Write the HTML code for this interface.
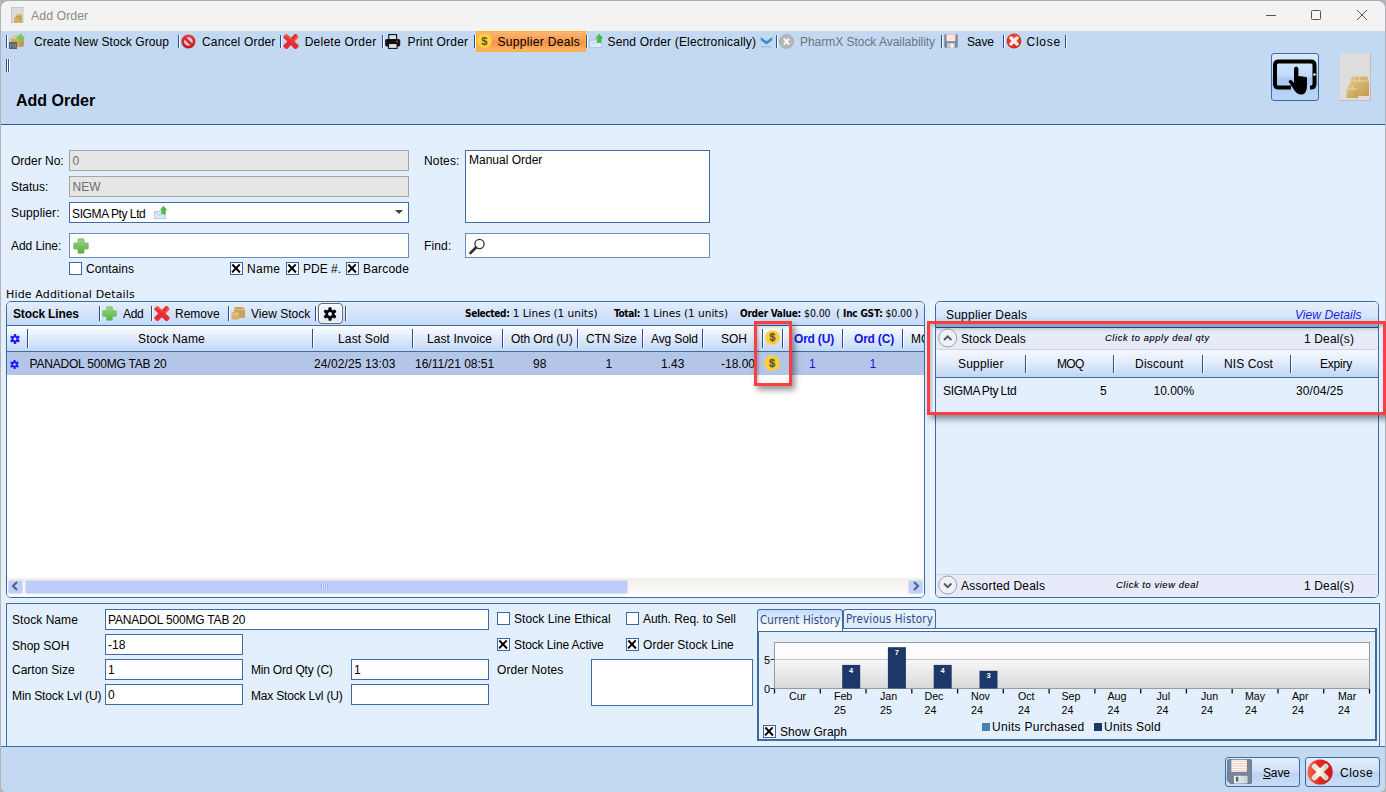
<!DOCTYPE html>
<html lang="en">
<head>
<meta charset="utf-8">
<title>Add Order</title>
<style>
*{box-sizing:border-box;margin:0;padding:0}
html,body{width:1386px;height:792px;overflow:hidden;background:#b2b3b6}
body{position:relative;font-family:"Liberation Sans",Arial,sans-serif;font-size:12px;color:#000}
#win{position:absolute;left:0;top:0;width:1386px;height:792px;overflow:hidden}
#winbg{position:absolute;left:1px;top:0;width:1384px;height:792px;background:#e4effd;border-radius:8px 8px 6px 6px;overflow:hidden;border-top:1px solid #a9adb6}
.abs,.t,.in,.sep,.cb{position:absolute}
.t{white-space:nowrap;line-height:14px;height:14px}
.g{color:#6d6d6d}
.sm{font-size:9.3px;font-style:italic;-webkit-text-stroke:.12px #000}
.seg{font-family:"DejaVu Sans Condensed","DejaVu Sans",sans-serif;font-size:11.5px;color:#2b4a85;letter-spacing:.21px}
.ax{font-size:10.67px;line-height:14px;height:28px;letter-spacing:-.05px}
.btn{border:1px solid #3f6ba3;border-radius:3px;background:linear-gradient(#e3eefd,#cfe0f8 50%,#bdd3f3 52%,#c9dcf7)}
.tah{font-family:"DejaVu Sans",sans-serif;font-size:10.5px}
.tah b{font-family:"DejaVu Sans Condensed","DejaVu Sans",sans-serif;font-size:10px;letter-spacing:-.35px}
.in{background:#fff;border:1px solid #3f6ba3}
.in.dis{background:#e6e6e6;border-color:#a5a5a5}
.in .t{left:2.5px}
.sep{width:2px;background:linear-gradient(90deg,#2c4f8c 50%,#fff 50%);height:15px}
.cb{width:13px;height:13px;border:1px solid #3a66a7;background:#fff}
.cb.on::before,.cb.on::after{content:"";position:absolute;left:4.4px;top:0.2px;width:2.2px;height:10.6px;background:#000;transform:rotate(44deg)}
.cb.on::after{transform:rotate(-44deg)}
#titlebar{left:0;top:0;width:1384px;height:30px;background:#f3f3f3}
#band{left:0;top:30px;width:1384px;height:93px;background:#c2d9f1}
#bandline{left:0;top:123px;width:1384px;height:1px;background:#2f5f98}
#footer{left:0;top:745px;width:1384px;height:46px;background:#c2d9f1;border-top:1px solid #3f6ba3}
</style>
</head>
<body>
<div id="win">
<div id="winbg">
<div id="titlebar" class="abs"></div>
<div id="band" class="abs"></div>
<div id="bandline" class="abs"></div>
<div id="footer" class="abs"></div>
</div>
<!-- TITLE BAR -->
<div class="t" style="left:31px;top:8px;font-size:12.4px;line-height:16px;height:16px;color:#8a8a8a">Add Order</div>
<!--TOOLBAR-->
<!-- title icon -->
<svg class="abs" style="left:11px;top:7px" width="13" height="16" viewBox="0 0 13 16"><rect x="0.5" y="0.5" width="11.5" height="15" fill="#dddbda" stroke="#c9c7c6"/><path d="M3 15.5V11.5L5 9.5V8L7 7H11V15.5Z" fill="#c9a35c"/><path d="M3 11.5H8.5V15.5H3Z" fill="#d4b06a"/><path d="M5 8H9.5L11 7" stroke="#e3c88e" fill="none"/></svg>
<!-- window controls -->
<svg class="abs" style="left:1260px;top:5px" width="120" height="22" viewBox="0 0 120 22"><g stroke="#555" stroke-width="1" fill="none"><path d="M6 10.5H16"/><rect x="51.5" y="5.5" width="9" height="9" rx="1"/><path d="M97 5L107 15M107 5L97 15"/></g></svg>
<!-- toolbar row -->
<div class="sep" style="left:6px;top:35px;height:13px"></div>
<svg class="abs" style="left:9px;top:33px" width="16" height="18" viewBox="0 0 16 18"><path d="M1.5 6L4.5 2H12.5L15 5V12L13 14H1.5Z" fill="#cfa964"/><path d="M4.5 2H12.5L15 5H10.5L9 6H1.5Z" fill="#e2c78f"/><path d="M10.5 5H15V12L13 14H10.5Z" fill="#c29a52"/><path d="M10.2 1H12.8V3.3H15.2V5.9H12.8V8.3H10.2V5.9H7.8V3.3H10.2Z" fill="#74c65a" stroke="#8fd676" stroke-width=".5"/><rect x="0" y="9" width="8" height="7" fill="#5a616d"/><path d="M1.5 10.5V14.5M3.2 10.5V14.5M5 10.5V14.5M6.5 10.5V14.5" stroke="#8b929e" stroke-width=".8"/></svg>
<div class="t" style="left:34px;top:35px;letter-spacing:.07px">Create New Stock Group</div>
<div class="sep" style="left:178px;top:35px;height:13px"></div>
<svg class="abs" style="left:181px;top:33.5px" width="15" height="15" viewBox="0 0 15 15"><defs><linearGradient id="cn" x1="0" y1="0" x2="0" y2="1"><stop offset="0" stop-color="#e43a3a"/><stop offset="1" stop-color="#c01820"/></linearGradient></defs><circle cx="7.4" cy="7.5" r="5.7" fill="#e9c9d2" stroke="url(#cn)" stroke-width="2.7"/><path d="M3.6 3.7L11.2 11.3" stroke="#d42a2e" stroke-width="2.7"/></svg>
<div class="t" style="left:202px;top:35px;letter-spacing:.18px">Cancel Order</div>
<div class="sep" style="left:280px;top:35px;height:13px"></div>
<svg class="abs" style="left:283px;top:34px" width="16" height="15" viewBox="0 0 16 15"><defs><linearGradient id="rx1" x1="0" y1="1" x2="1" y2="0"><stop offset="0" stop-color="#e8222c"/><stop offset=".6" stop-color="#ea3034"/><stop offset="1" stop-color="#f4805e"/></linearGradient></defs><g fill="url(#rx1)"><rect x="-2.6" y="-9" width="5.2" height="18" rx="1.4" transform="translate(8 7.5) rotate(45)"/><rect x="-2.6" y="-9" width="5.2" height="18" rx="1.4" transform="translate(8 7.5) rotate(-45)"/></g></svg>
<div class="t" style="left:304.7px;top:35px;letter-spacing:.25px">Delete Order</div>
<div class="sep" style="left:382px;top:35px;height:13px"></div>
<svg class="abs" style="left:385px;top:34px" width="16" height="15" viewBox="0 0 16 15"><rect x="3.8" y="0.6" width="7.8" height="5" fill="#cfe0f5" stroke="#111" stroke-width="1.1"/><rect x="0.2" y="5" width="15" height="7.4" rx="1.6" fill="#111"/><rect x="3.6" y="9.6" width="8.4" height="4.8" fill="#f4f4f4" stroke="#111" stroke-width="1.1"/><path d="M5 12H10.5" stroke="#bbb" stroke-width=".8"/><circle cx="12" cy="7.4" r="1" fill="#e8262d"/></svg>
<div class="t" style="left:407.5px;top:35px;letter-spacing:.18px">Print Order</div>
<div class="sep" style="left:474px;top:35px;height:13px"></div>
<div class="abs" style="left:476px;top:31px;width:110px;height:21px;border:1px solid #fcb42c;background:linear-gradient(#fcb774,#f9a055 40%,#f78f45 55%,#fbac5e 85%,#fcb366)"></div>
<svg class="abs" style="left:477px;top:33px" width="15" height="16" viewBox="0 0 15 16"><circle cx="7.4" cy="7.8" r="7.4" fill="#fdd03c"/><text x="7.4" y="11.8" font-size="11" font-weight="bold" font-family="Liberation Sans, sans-serif" text-anchor="middle" fill="#5f5320">$</text></svg><div class="sep" style="left:586px;top:35px;height:13px"></div>
<div class="t" style="left:497.5px;top:35px;letter-spacing:.33px">Supplier Deals</div>
<svg class="abs" style="left:588px;top:33px" width="16" height="16" viewBox="0 0 16 16"><rect x="1.5" y="7" width="12" height="7.6" fill="#dde9fa" stroke="#a9c2e6" stroke-width=".9"/><path d="M1.8 7.4L6.5 11L9 9" fill="none" stroke="#b3c9ea" stroke-width=".9"/><defs><linearGradient id="sg1" x1="0" y1="0" x2="1" y2="0"><stop offset="0" stop-color="#6fd070"/><stop offset="1" stop-color="#27a832"/></linearGradient></defs><path d="M11 0.8L15.2 5.6H13.2V10H8.8V5.6H6.8Z" fill="url(#sg1)"/></svg>
<div class="t" style="left:607.5px;top:35px;letter-spacing:.17px">Send Order (Electronically)</div>
<svg class="abs" style="left:760px;top:36px" width="13" height="12" viewBox="0 0 13 12"><path d="M0.8 1L6.5 5.2L12.2 1V4.2L6.5 8.6L0.8 4.2Z" fill="#3a90c2"/><path d="M1 10.8H12" stroke="#9db4cc" stroke-width="1"/></svg>
<div class="sep" style="left:776px;top:35px;height:13px"></div>
<svg class="abs" style="left:779px;top:34px" width="15" height="15" viewBox="0 0 15 15"><circle cx="7.5" cy="7.5" r="6.8" fill="#b8b8b8" stroke="#a5a5a5"/><path d="M5 4.6L10 10.4M10 4.6L5 10.4" stroke="#fff" stroke-width="2"/></svg>
<div class="t" style="left:800px;top:35px;color:#6f7280;letter-spacing:-.03px">PharmX Stock Availability</div>
<div class="sep" style="left:941px;top:35px;height:13px"></div>
<svg class="abs" style="left:944px;top:34px" width="14" height="14" viewBox="0 0 14 14"><rect x="0.3" y="0.3" width="13.4" height="13.4" rx=".8" fill="#7a8696"/><rect x="2.4" y="0.3" width="9" height="7" fill="#fde2db"/><rect x="3" y="9" width="8" height="4.7" fill="#c5ccd7"/><rect x="6.8" y="9.8" width="2.6" height="3.9" fill="#f7f8fa"/></svg>
<div class="t" style="left:967px;top:35px;letter-spacing:-.15px">Save</div>
<div class="sep" style="left:1003px;top:35px;height:13px"></div>
<svg class="abs" style="left:1005.6px;top:33.4px" width="16" height="16" viewBox="0 0 16 16"><defs><radialGradient id="cl1" cx=".5" cy=".35" r=".7"><stop offset="0" stop-color="#f0523e"/><stop offset="1" stop-color="#d8201c"/></radialGradient></defs><circle cx="8" cy="8" r="7.4" fill="url(#cl1)"/><path d="M5 5L11 11M11 5L5 11" stroke="#f6efe6" stroke-width="3.3" stroke-linecap="round"/></svg>
<div class="t" style="left:1026.5px;top:35px;letter-spacing:.75px">Close</div>
<div class="sep" style="left:1065px;top:35px;height:13px"></div>
<!-- grip -->
<div class="sep" style="left:6px;top:59px;height:13px"></div><div class="sep" style="left:8px;top:59px;height:13px"></div>
<div class="t" style="left:16px;top:92px;font-size:16px;font-weight:bold;line-height:18px;height:18px">Add Order</div>
<!--FORM-->
<!-- top right buttons -->
<div class="abs" style="left:1271px;top:53px;width:48px;height:48px;border:1px solid #3f6ba3;border-radius:3px;background:linear-gradient(#d8ebff,#c3dcfb 45%,#a9c9f3 55%,#bdd6fa)"></div>
<svg class="abs" style="left:1271px;top:53px" width="48" height="48" viewBox="0 0 48 48"><path d="M20 34.5H7.5Q4 34.5 4 31V12Q4 8.5 7.5 8.5H40Q43.5 8.5 43.5 12V31Q43.5 34.5 40 34.5H39" fill="none" stroke="#000" stroke-width="4"/><circle cx="43.5" cy="21.5" r="1.2" fill="#fff"/><path d="M23 16Q23 13.5 25.2 13.5Q27.4 13.5 27.4 16V23.5Q28.5 22.6 30 23.6Q31.5 22.8 33 24Q34.5 23.4 36 24.6V32Q36 41.5 30.5 41.5Q25.5 41.5 22.5 36L17.5 28.5Q18.5 26 21 27.5L23 30Z" fill="#000"/></svg>
<svg class="abs" style="left:1340px;top:53px" width="31" height="48" viewBox="0 0 31 48"><defs><linearGradient id="bx1" x1="0" y1="0" x2="1" y2="1"><stop offset="0" stop-color="#e2c88f"/><stop offset="1" stop-color="#c49a4e"/></linearGradient></defs><rect x="0" y="0" width="31" height="48" fill="#dedcdc"/><path d="M0 47.5H31M30.5 0V48" stroke="#bdbbbb"/><path d="M12 23.5H27L29 28V43H10V28Z" fill="url(#bx1)"/><path d="M10 28H29" stroke="#ead7a8" stroke-width="1"/><path d="M19.5 23.5V28" stroke="#ead7a8"/><path d="M8 32.5H16.5L18 36V45H6.5V36Z" fill="url(#bx1)"/><path d="M6.5 36H18" stroke="#ead7a8"/><path d="M12.3 32.5V36" stroke="#ead7a8"/></svg>
<!-- form -->
<div class="t" style="left:11px;top:154px">Order No:</div>
<div class="in dis" style="left:69px;top:150px;width:340px;height:21px"><div class="t g" style="top:3px">0</div></div>
<div class="t" style="left:11px;top:180px">Status:</div>
<div class="in dis" style="left:69px;top:176px;width:340px;height:21px"><div class="t g" style="top:3px">NEW</div></div>
<div class="t" style="left:11px;top:206px;letter-spacing:.15px">Supplier:</div>
<div class="in" style="left:69px;top:202px;width:340px;height:21px"><div class="t" style="top:4px;left:2px;letter-spacing:-.36px;word-spacing:-.3px">SIGMA Pty Ltd</div>
<svg class="abs" style="left:83px;top:1.5px" width="15" height="15" viewBox="0 0 16 16"><rect x="1.5" y="7" width="12" height="7.6" fill="#dde9fa" stroke="#a9c2e6" stroke-width=".9"/><path d="M1.8 7.4L6.5 11L9 9" fill="none" stroke="#b3c9ea" stroke-width=".9"/><defs><linearGradient id="sg2" x1="0" y1="0" x2="1" y2="0"><stop offset="0" stop-color="#6fd070"/><stop offset="1" stop-color="#27a832"/></linearGradient></defs><path d="M11 0.8L15.2 5.6H13.2V10H8.8V5.6H6.8Z" fill="url(#sg2)"/></svg>
<svg class="abs" style="left:325px;top:7px" width="8" height="4" viewBox="0 0 8 4"><path d="M0 0H8L4 4Z" fill="#444"/></svg></div>
<div class="t" style="left:11px;top:239px;letter-spacing:-.05px">Add Line:</div>
<div class="in" style="left:69px;top:233px;width:340px;height:25px;border-color:#6a8cc0">
<svg class="abs" style="left:3px;top:4px" width="16" height="16" viewBox="0 0 16 16"><defs><linearGradient id="pl1" x1="0" y1="0" x2="0" y2="1"><stop offset="0" stop-color="#9ad788"/><stop offset="1" stop-color="#58ad40"/></linearGradient></defs><path d="M5.6 0.8H10.4Q11 0.8 11 1.4V5H14.6Q15.2 5 15.2 5.6V10.4Q15.2 11 14.6 11H11V14.6Q11 15.2 10.4 15.2H5.6Q5 15.2 5 14.6V11H1.4Q0.8 11 0.8 10.4V5.6Q0.8 5 1.4 5H5V1.4Q5 0.8 5.6 0.8Z" fill="url(#pl1)" stroke="#6fbd58" stroke-width=".8"/></svg></div>
<div class="cb" style="left:69px;top:262px"></div><div class="t" style="left:86px;top:262px;letter-spacing:.1px">Contains</div>
<div class="cb on" style="left:230px;top:262px"></div><div class="t" style="left:247px;top:262px;letter-spacing:.3px">Name</div>
<div class="cb on" style="left:286px;top:262px"></div><div class="t" style="left:303px;top:262px">PDE #.</div>
<div class="cb on" style="left:346px;top:262px"></div><div class="t" style="left:363px;top:262px;letter-spacing:.2px">Barcode</div>
<div class="t" style="left:424px;top:154px;letter-spacing:.15px">Notes:</div>
<div class="in" style="left:465px;top:150px;width:245px;height:73px"><div class="t" style="top:2px;left:3px">Manual Order</div></div>
<div class="t" style="left:424px;top:239px;letter-spacing:.15px">Find:</div>
<div class="in" style="left:465px;top:233px;width:245px;height:25px;border-color:#6a8cc0">
<svg class="abs" style="left:3px;top:4px" width="18" height="17" viewBox="0 0 18 17"><circle cx="10.5" cy="6" r="4.6" fill="#fff" stroke="#333" stroke-width="1.3"/><path d="M7 9.5L1.5 15" stroke="#333" stroke-width="2.6" stroke-linecap="round"/></svg></div>
<div class="t" style="left:6px;top:288px;font-family:'DejaVu Sans',sans-serif;font-size:11px;letter-spacing:.15px">Hide Additional Details</div>
<!--STOCKLINES-->
<!-- stock lines panel -->
<div class="abs" style="left:6px;top:301px;width:919px;height:297px;border:1px solid #3f6ba3;border-radius:5px;background:#fff;overflow:hidden">
<div class="abs" style="left:0;top:0;width:918px;height:23px;background:linear-gradient(#e3eefd,#d3e3fa 50%,#c6daf7)"></div>
<div class="abs" style="left:0;top:23px;width:918px;height:1px;background:#3f6ba3"></div>
<div class="abs" style="left:0;top:24px;width:918px;height:25px;background:linear-gradient(#fbfdff,#e4eefc 40%,#cfe0f8 75%,#c4d8f6)"></div>
<div class="abs" style="left:0;top:49px;width:918px;height:1px;background:#3f6ba3"></div>
<div class="abs" style="left:0;top:50px;width:918px;height:23px;background:#b4c6e7"></div>
<div class="abs" style="left:0;top:276px;width:918px;height:19px;background:linear-gradient(#f0eee7,#f8f7f3 50%,#fefefd)"></div>
<div class="abs" style="left:1px;top:278px;width:15px;height:14px;background:#c1d0fa;border:1px solid #d5defb;border-radius:2px"></div>
<div class="abs" style="left:18px;top:278px;width:603px;height:14px;background:#bdcdf8;border:1px solid #d5defb;border-radius:2px"></div>
<div class="abs" style="left:901px;top:278px;width:15px;height:14px;background:#c1d0fa;border:1px solid #d5defb;border-radius:2px"></div>
</div>
<svg class="abs" style="left:11px;top:581px" width="8" height="10" viewBox="0 0 8 10"><path d="M6 1L2 5L6 9" fill="none" stroke="#4d6185" stroke-width="2"/></svg>
<svg class="abs" style="left:912px;top:581px" width="8" height="10" viewBox="0 0 8 10"><path d="M2 1L6 5L2 9" fill="none" stroke="#4d6185" stroke-width="2"/></svg>
<div class="abs" style="left:321px;top:584px;width:7px;height:5px;background:repeating-linear-gradient(90deg,#9fb4ec 0 1px,#dfe7fd 1px 2px)"></div>
<!-- header toolbar -->
<div class="t" style="left:13px;top:307px;font-weight:bold;letter-spacing:-.15px">Stock Lines</div>
<div class="sep" style="left:99px;top:306px;height:15px"></div>
<svg class="abs" style="left:102px;top:306px" width="15" height="15" viewBox="0 0 16 16"><defs><linearGradient id="pl2" x1="0" y1="0" x2="0" y2="1"><stop offset="0" stop-color="#9ad788"/><stop offset="1" stop-color="#58ad40"/></linearGradient></defs><path d="M5.6 0.8H10.4Q11 0.8 11 1.4V5H14.6Q15.2 5 15.2 5.6V10.4Q15.2 11 14.6 11H11V14.6Q11 15.2 10.4 15.2H5.6Q5 15.2 5 14.6V11H1.4Q0.8 11 0.8 10.4V5.6Q0.8 5 1.4 5H5V1.4Q5 0.8 5.6 0.8Z" fill="url(#pl2)" stroke="#6fbd58" stroke-width=".8"/></svg>
<div class="t" style="left:123px;top:307px;letter-spacing:-.3px">Add</div>
<div class="sep" style="left:151px;top:306px;height:15px"></div>
<svg class="abs" style="left:154px;top:306px" width="16" height="15" viewBox="0 0 16 15"><defs><linearGradient id="rx2" x1="0" y1="1" x2="1" y2="0"><stop offset="0" stop-color="#e8222c"/><stop offset=".6" stop-color="#ea3034"/><stop offset="1" stop-color="#f4805e"/></linearGradient></defs><g fill="url(#rx2)"><rect x="-2.6" y="-9" width="5.2" height="18" rx="1.4" transform="translate(8 7.5) rotate(45)"/><rect x="-2.6" y="-9" width="5.2" height="18" rx="1.4" transform="translate(8 7.5) rotate(-45)"/></g></svg>
<div class="t" style="left:175px;top:307px">Remove</div>
<div class="sep" style="left:228px;top:306px;height:15px"></div>
<svg class="abs" style="left:231px;top:306px" width="15" height="14" viewBox="0 0 15 14"><path d="M4 1H12L14 3.5V12H3V3.5Z" fill="#c9a35c"/><path d="M3 3.5H14" stroke="#e0c48a"/><path d="M1.5 6H7L8 8V13.5H0.5V8Z" fill="#d6b26c"/><path d="M0.5 8H8" stroke="#e8d19d"/></svg>
<div class="t" style="left:251px;top:307px">View Stock</div>
<div class="sep" style="left:315px;top:306px;height:15px"></div>
<div class="abs" style="left:318px;top:303px;width:25px;height:21px;border:1px solid #6a6a6a;border-radius:4px;background:linear-gradient(#f4f8fe,#dce8fa);box-shadow:inset 0 0 0 1px rgba(255,255,255,.8)"></div>
<svg class="abs" style="left:323px;top:307px" width="14" height="14" viewBox="0 0 14 14"><g fill="#000"><circle cx="7" cy="7" r="4.6"/><g id="gt"><rect x="5.4" y="0.3" width="3.2" height="13.4" rx="1"/></g><rect x="5.4" y="0.3" width="3.2" height="13.4" rx="1" transform="rotate(60 7 7)"/><rect x="5.4" y="0.3" width="3.2" height="13.4" rx="1" transform="rotate(120 7 7)"/></g><circle cx="7" cy="7" r="2" fill="#e8f0fc"/></svg>
<div class="sep" style="left:345px;top:306px;height:15px"></div>
<div class="t tah" style="left:465px;top:306px"><b>Selected:</b> <span>1 Lines (1 units)</span></div>
<div class="t tah" style="left:614px;top:306px"><b>Total:</b> <span>1 Lines (1 units)</span></div>
<div class="t tah" style="left:740px;top:306px"><b style="letter-spacing:-.25px">Order Value:</b></div>
<div class="t tah" style="left:804px;top:306px;font-family:'DejaVu Sans Condensed',sans-serif;letter-spacing:-.12px">$0.00</div>
<div class="t tah" style="left:836px;top:306px">(</div>
<div class="t tah" style="left:843px;top:306px"><b style="letter-spacing:-.2px">Inc GST:</b></div>
<div class="t tah" style="left:885.5px;top:306px;font-family:'DejaVu Sans Condensed',sans-serif;letter-spacing:-.15px">$0.00</div>
<div class="t tah" style="left:914.5px;top:306px">)</div>
<!-- column headers -->
<svg class="abs gear" style="left:10px;top:334px" width="10" height="10" viewBox="0 0 14 14"><g fill="#1a1aff"><circle cx="7" cy="7" r="4.6"/><rect x="5.2" y="0" width="3.6" height="14" rx="1"/><rect x="5.2" y="0" width="3.6" height="14" rx="1" transform="rotate(60 7 7)"/><rect x="5.2" y="0" width="3.6" height="14" rx="1" transform="rotate(120 7 7)"/></g><circle cx="7" cy="7" r="2" fill="#eef4fe"/></svg>
<div class="sep" style="left:27px;top:329px;height:19px"></div>
<div class="t" style="left:138px;top:332px;letter-spacing:.15px">Stock Name</div>
<div class="sep" style="left:312px;top:329px;height:19px"></div>
<div class="t" style="left:338px;top:332px;letter-spacing:.15px">Last Sold</div>
<div class="sep" style="left:412px;top:329px;height:19px"></div>
<div class="t" style="left:427px;top:332px;letter-spacing:.08px">Last Invoice</div>
<div class="sep" style="left:502px;top:329px;height:19px"></div>
<div class="t" style="left:511px;top:332px;letter-spacing:-.1px">Oth Ord (U)</div>
<div class="sep" style="left:577px;top:329px;height:19px"></div>
<div class="t" style="left:586px;top:332px;letter-spacing:-.1px">CTN Size</div>
<div class="sep" style="left:642px;top:329px;height:19px"></div>
<div class="t" style="left:651px;top:332px;letter-spacing:-.12px">Avg Sold</div>
<div class="sep" style="left:702px;top:329px;height:19px"></div>
<div class="t" style="left:721px;top:332px">SOH</div>
<div class="sep" style="left:762px;top:329px;height:19px"></div>
<svg class="abs" style="left:765px;top:330px" width="15" height="15" viewBox="0 0 15 15"><circle cx="7.5" cy="7.5" r="7.3" fill="#fdd038"/><text x="7.5" y="11.2" font-size="10.5" font-weight="bold" font-family="Liberation Sans, sans-serif" text-anchor="middle" fill="#605a38" stroke="#605a38" stroke-width=".3">$</text></svg>
<div class="sep" style="left:782px;top:329px;height:19px"></div>
<div class="t" style="left:794px;top:332px;font-weight:bold;color:#1414e6;letter-spacing:-.2px">Ord (U)</div>
<div class="sep" style="left:842px;top:329px;height:19px"></div>
<div class="t" style="left:854px;top:332px;font-weight:bold;color:#1414e6;letter-spacing:-.2px">Ord (C)</div>
<div class="sep" style="left:902px;top:329px;height:19px"></div>
<div class="t" style="left:911px;top:332px;width:13px;overflow:hidden">MOQ</div>
<!-- row -->
<svg class="abs gear" style="left:10px;top:359.5px" width="9" height="9" viewBox="0 0 14 14"><g fill="#1a1aff"><circle cx="7" cy="7" r="4.6"/><rect x="5.2" y="0" width="3.6" height="14" rx="1"/><rect x="5.2" y="0" width="3.6" height="14" rx="1" transform="rotate(60 7 7)"/><rect x="5.2" y="0" width="3.6" height="14" rx="1" transform="rotate(120 7 7)"/></g><circle cx="7" cy="7" r="2" fill="#c4d2ec"/></svg>
<div class="t" style="left:29.5px;top:357px;letter-spacing:-.2px">PANADOL 500MG TAB 20</div>
<div class="t" style="left:314px;top:357px;letter-spacing:.1px">24/02/25 13:03</div>
<div class="t" style="left:415px;top:357px">16/11/21 08:51</div>
<div class="t" style="left:533px;top:357px">98</div>
<div class="t" style="left:605.5px;top:357px">1</div>
<div class="t" style="left:661px;top:357px">1.43</div>
<div class="t" style="left:721px;top:357px">-18.00</div>
<svg class="abs" style="left:764px;top:355px" width="16" height="16" viewBox="0 0 16 16"><circle cx="8" cy="8" r="7.8" fill="#fdd038"/><text x="8" y="11.8" font-size="11" font-weight="bold" font-family="Liberation Sans, sans-serif" text-anchor="middle" fill="#605a38" stroke="#605a38" stroke-width=".3">$</text></svg>
<div class="t" style="left:809px;top:357px;color:#1414d2">1</div>
<div class="t" style="left:869.5px;top:357px;color:#1414d2">1</div>
<!--DEALS-->
<!-- splitter -->
<div class="abs" style="left:930px;top:301px;width:5px;height:297px;background:#edf4fe"></div>
<!-- supplier deals panel -->
<div class="abs" style="left:935px;top:301px;width:444px;height:297px;border:1px solid #3f6ba3;border-radius:5px;background:#e4effd;overflow:hidden">
<div class="abs" style="left:0;top:0;width:442px;height:25px;background:linear-gradient(#e6f0fd,#d6e5fb 55%,#c3d7f5 85%,#a3b8da)"></div><div class="abs" style="left:0;top:25px;width:442px;height:1px;background:#254579"></div>
<div class="abs" style="left:0;top:26px;width:442px;height:22px;background:linear-gradient(#c9cde0,#e0e5f6 3px,#e6eaf9 5px);border-bottom:1px solid #d2d3dc;border-radius:0 0 3px 3px"></div>
<div class="abs" style="left:0;top:48px;width:442px;height:27px;background:linear-gradient(#f5f9ff,#e4eefc 40%,#cfe0f8 75%,#c0d5f5)"></div>
<div class="abs" style="left:0;top:75px;width:442px;height:1px;background:#3f6ba3"></div>
<div class="abs" style="left:0;top:272px;width:442px;height:23px;background:#e6eaf9;border-top:1px solid #cfd0d8;border-radius:3px 3px 0 0"></div>
</div>
<div class="t" style="left:946px;top:308px;letter-spacing:.22px">Supplier Deals</div>
<div class="t" style="left:1295px;top:308px;font-style:italic;color:#1c1ce0;letter-spacing:.06px">View Details</div>
<svg class="abs" style="left:938px;top:328px" width="20" height="20" viewBox="0 0 20 20"><circle cx="9.7" cy="10" r="9" fill="#eef0fa" stroke="#a0a0a0"/><path d="M6 12L9.7 8.3L13.4 12" fill="none" stroke="#555" stroke-width="1.8"/></svg>
<div class="t" style="left:961px;top:331.5px;letter-spacing:.08px">Stock Deals</div>
<div class="t sm" style="left:1105px;top:330.5px;letter-spacing:.62px">Click to apply deal qty</div>
<div class="t" style="left:1304px;top:331.5px;letter-spacing:.15px">1 Deal(s)</div>
<div class="t" style="left:958px;top:356.5px;letter-spacing:.2px">Supplier</div>
<div class="sep" style="left:1025px;top:355px;height:18px"></div>
<div class="t" style="left:1057px;top:356.5px;letter-spacing:-.7px">MOQ</div>
<div class="sep" style="left:1113px;top:355px;height:18px"></div>
<div class="t" style="left:1135px;top:356.5px;letter-spacing:.25px">Discount</div>
<div class="sep" style="left:1202px;top:355px;height:18px"></div>
<div class="t" style="left:1224px;top:356.5px;letter-spacing:.12px">NIS Cost</div>
<div class="sep" style="left:1290px;top:355px;height:18px"></div>
<div class="t" style="left:1320px;top:356.5px;letter-spacing:-.2px">Expiry</div>
<div class="t" style="left:943px;top:383.5px;letter-spacing:-.3px;word-spacing:-.7px">SIGMA Pty Ltd</div>
<div class="t" style="left:1100px;top:383.5px">5</div>
<div class="t" style="left:1153.5px;top:383.5px">10.00%</div>
<div class="t" style="left:1296px;top:383.5px;letter-spacing:.08px">30/04/25</div>
<svg class="abs" style="left:938px;top:575px" width="20" height="20" viewBox="0 0 20 20"><circle cx="9.7" cy="10" r="9" fill="#eef0fa" stroke="#a0a0a0"/><path d="M6 8.5L9.7 12.2L13.4 8.5" fill="none" stroke="#555" stroke-width="1.8"/></svg>
<div class="t" style="left:961px;top:578.5px;letter-spacing:.2px">Assorted Deals</div>
<div class="t sm" style="left:1116px;top:577.5px;letter-spacing:.6px">Click to view deal</div>
<div class="t" style="left:1304px;top:578.5px;letter-spacing:.15px">1 Deal(s)</div>
<!-- red highlight boxes -->
<div class="abs" style="left:754px;top:321px;width:38px;height:65px;border:3px solid #fb3e40;box-shadow:3px 4px 6px rgba(0,0,0,.42), inset 2px 3px 3px rgba(0,0,0,.2)"></div>
<div class="abs" style="left:927px;top:321px;width:459px;height:94px;border:3px solid #fb3e40;box-shadow:3px 4px 6px rgba(0,0,0,.42), inset 2px 3px 3px rgba(0,0,0,.2)"></div>
<!--BOTTOM-->
<!-- bottom panel -->
<div class="abs" style="left:6px;top:603px;width:1374px;height:144px;border:1px solid #3f6ba3;background:#e4effd"></div>
<div class="t" style="left:12px;top:613px;letter-spacing:0.05px;">Stock Name</div>
<div class="in" style="left:105px;top:609px;width:384px;height:21px"><div class="t" style="top:2.5px;left:2px"><span style="letter-spacing:-.18px">PANADOL 500MG TAB 20</span></div></div>
<div class="t" style="left:12px;top:638.5px;">Shop SOH</div>
<div class="in" style="left:105px;top:634px;width:138px;height:21px"><div class="t" style="top:2.5px;left:2px">-18</div></div>
<div class="t" style="left:12px;top:662.5px;">Carton Size</div>
<div class="in" style="left:105px;top:659px;width:138px;height:21px"><div class="t" style="top:2.5px;left:2px">1</div></div>
<div class="t" style="left:251px;top:662.5px;letter-spacing:-0.2px;">Min Ord Qty (C)</div>
<div class="in" style="left:351px;top:659px;width:138px;height:21px"><div class="t" style="top:2.5px;left:2px">1</div></div>
<div class="t" style="left:12px;top:688.5px;letter-spacing:-0.12px;">Min Stock Lvl (U)</div>
<div class="in" style="left:105px;top:684px;width:138px;height:21px"><div class="t" style="top:3px;left:2px">0</div></div>
<div class="t" style="left:251px;top:688.5px;letter-spacing:-0.18px;">Max Stock Lvl (U)</div>
<div class="in" style="left:351px;top:684px;width:138px;height:21px"></div>
<div class="cb" style="left:497px;top:612px"></div>
<div class="t" style="left:514px;top:611.5px;letter-spacing:0.07px;">Stock Line Ethical</div>
<div class="cb" style="left:626px;top:612px"></div>
<div class="t" style="left:643px;top:611.5px;letter-spacing:-0.03px;">Auth. Req. to Sell</div>
<div class="cb on" style="left:497px;top:638px"></div>
<div class="t" style="left:514px;top:637.5px;letter-spacing:-0.1px;">Stock Line Active</div>
<div class="cb on" style="left:626px;top:638px"></div>
<div class="t" style="left:643px;top:637.5px;letter-spacing:0.05px;">Order Stock Line</div>
<div class="t" style="left:497px;top:662.5px;letter-spacing:0.1px;">Order Notes</div>
<div class="in" style="left:591px;top:659px;width:162px;height:47px"></div>
<div class="abs" style="left:757px;top:628px;width:620px;height:113px;border:2px solid #3f6ba3;border-top:1px solid #3f6ba3;background:#e4effd"></div>
<div class="abs" style="left:759px;top:629px;width:616px;height:2px;background:#fff"></div>
<div class="abs" style="left:759px;top:631px;width:616px;height:1px;background:#3f6ba3"></div>
<div class="abs" style="left:843px;top:609px;width:93px;height:19px;border:1px solid #3f6ba3;border-bottom:none;border-radius:3px 3px 0 0;background:linear-gradient(#eaf3fe,#dbe8fb)"></div>
<div class="abs" style="left:757px;top:609px;width:86px;height:22px;border:1px solid #3f6ba3;border-bottom:none;border-radius:3px 3px 0 0;background:linear-gradient(#c5dafb,#dce8fd 35%,#f4f8ff 70%,#fff 90%)"></div>
<div class="t seg" style="left:760px;top:612.5px;letter-spacing:.1px">Current History</div>
<div class="t seg" style="left:846px;top:611.5px">Previous History</div>
<svg class="abs" style="left:757px;top:632px" width="620" height="108" viewBox="757 632 620 108" font-family="Liberation Sans, sans-serif">
<defs><linearGradient id="cg" x1="0" y1="0" x2="0" y2="1"><stop offset="0" stop-color="#fff"/><stop offset=".3" stop-color="#fcfcfc"/><stop offset="1" stop-color="#d9d9d9"/></linearGradient></defs>
<rect x="774.5" y="642.5" width="595" height="46" fill="url(#cg)" stroke="#9a9a9a"/>
<path d="M775 659.5H1369" stroke="#c4c4c4"/>
<path d="M774.5 642V693M771 659.5H774M771 688.5H1370" stroke="#222" fill="none" opacity="0"/>
<path d="M770.5 659.5H774M770.5 688.5H774" stroke="#333"/>
<path d="M774.5 689V693.5M820.3 689V693.5M866.0 689V693.5M911.8 689V693.5M957.6 689V693.5M1003.3 689V693.5M1049.1 689V693.5M1094.9 689V693.5M1140.7 689V693.5M1186.4 689V693.5M1232.2 689V693.5M1278.0 689V693.5M1323.7 689V693.5M1369.5 689V693.5" stroke="#111" stroke-width="1.3"/>
<rect x="842.2" y="664.9" width="18" height="23.6" fill="#1c3869"/>
<text x="851.2" y="672.5" font-size="7.5" font-weight="bold" fill="#fff" text-anchor="middle">4</text>
<rect x="887.9" y="647.2" width="18" height="41.3" fill="#1c3869"/>
<text x="896.9" y="654.8" font-size="7.5" font-weight="bold" fill="#fff" text-anchor="middle">7</text>
<rect x="933.7" y="664.9" width="18" height="23.6" fill="#1c3869"/>
<text x="942.7" y="672.5" font-size="7.5" font-weight="bold" fill="#fff" text-anchor="middle">4</text>
<rect x="979.5" y="670.8" width="18" height="17.7" fill="#1c3869"/>
<text x="988.5" y="678.4" font-size="7.5" font-weight="bold" fill="#fff" text-anchor="middle">3</text>
<text x="770" y="663.5" font-size="11" text-anchor="end">5</text><text x="770" y="693" font-size="11" text-anchor="end">0</text>
<rect x="982" y="723" width="8" height="8" fill="#4682b4"/><rect x="1094" y="723" width="8" height="8" fill="#1c3869"/>
</svg>
<div class="t ax" style="left:789.0px;top:689px">Cur<br></div>
<div class="t ax" style="left:834.0px;top:689px">Feb<br>25</div>
<div class="t ax" style="left:880.0px;top:689px">Jan<br>25</div>
<div class="t ax" style="left:924.5px;top:689px">Dec<br>24</div>
<div class="t ax" style="left:971.0px;top:689px">Nov<br>24</div>
<div class="t ax" style="left:1018.0px;top:689px">Oct<br>24</div>
<div class="t ax" style="left:1061.5px;top:689px">Sep<br>24</div>
<div class="t ax" style="left:1107.5px;top:689px">Aug<br>24</div>
<div class="t ax" style="left:1156.5px;top:689px">Jul<br>24</div>
<div class="t ax" style="left:1201.0px;top:689px">Jun<br>24</div>
<div class="t ax" style="left:1245.0px;top:689px">May<br>24</div>
<div class="t ax" style="left:1292.0px;top:689px">Apr<br>24</div>
<div class="t ax" style="left:1338.0px;top:689px">Mar<br>24</div>
<div class="cb on" style="left:763px;top:725px"></div>
<div class="t" style="left:780px;top:724.5px;letter-spacing:0.03px;">Show Graph</div>
<div class="t" style="left:992px;top:719.5px;letter-spacing:0.3px;">Units Purchased</div>
<div class="t" style="left:1104px;top:719.5px;letter-spacing:0.22px;">Units Sold</div>
<!--FOOTERBTNS-->
<!-- footer buttons -->
<div class="abs btn" style="left:1225px;top:757px;width:75px;height:30px"></div>
<svg class="abs" style="left:1227px;top:759px" width="25" height="25" viewBox="0 0 25 25"><defs><linearGradient id="fs1" x1="0" y1="0" x2="1" y2="0"><stop offset="0" stop-color="#f4f5f7"/><stop offset="1" stop-color="#c8ced8"/></linearGradient></defs><path d="M1.5 0.5H23.5Q24.5 0.5 24.5 1.5V23.5Q24.5 24.5 23.5 24.5H3.5L0.5 21.5V1.5Q0.5 0.5 1.5 0.5Z" fill="#76859a" stroke="#5f6d82" stroke-width=".8"/><rect x="4.5" y="0.8" width="15.2" height="12" fill="#fff"/><path d="M4.5 2.2H19.7M4.5 4.6H19.7M4.5 7H19.7M4.5 9.4H19.7M4.5 11.6H19.7" stroke="#fbd0c4" stroke-width="1.3"/><rect x="7" y="16.8" width="13.6" height="7.7" fill="url(#fs1)"/><rect x="8.8" y="17.8" width="2.6" height="4.8" fill="#5a677a"/></svg>
<div class="t" style="left:1263px;top:766px;letter-spacing:-.15px"><u>S</u>ave</div>
<div class="abs btn" style="left:1305px;top:757px;width:75px;height:30px"></div>
<svg class="abs" style="left:1307px;top:759px" width="26" height="26" viewBox="0 0 26 26"><defs><linearGradient id="cl2" x1="0" y1="0" x2="1" y2="0"><stop offset="0" stop-color="#f26a50"/><stop offset=".45" stop-color="#e42a24"/><stop offset="1" stop-color="#cc161c"/></linearGradient><linearGradient id="cl3" x1="0" y1="0" x2="1" y2="0"><stop offset="0" stop-color="#e8e2cf"/><stop offset=".45" stop-color="#fbf9ec"/><stop offset="1" stop-color="#d8d2c2"/></linearGradient></defs><circle cx="13.1" cy="13" r="12.6" fill="url(#cl2)"/><path d="M7.4 7.3L18.8 18.7M18.8 7.3L7.4 18.7" stroke="url(#cl3)" stroke-width="5.4" stroke-linecap="round"/></svg>
<div class="t" style="left:1340px;top:765.5px;letter-spacing:.5px">Close</div>
</div>
</body>
</html>
